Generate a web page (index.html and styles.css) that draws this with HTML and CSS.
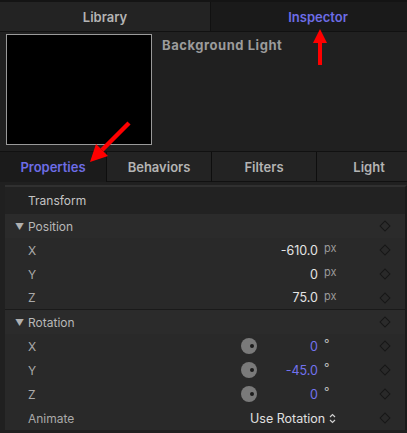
FILE: index.html
```html
<!DOCTYPE html>
<html>
<head>
<meta charset="utf-8">
<link rel="stylesheet" href="styles.css">
</head>
<body>
<div class="app">
  <div class="toptabs">
    <div class="toptab">Library</div>
    <div class="toptab active">Inspector</div>
  </div>
  <div class="header">
    <div class="thumb"></div>
    <div class="title">Background Light</div>
  </div>
  <div class="subtabs">
    <div class="subtab active">Properties</div>
    <div class="subtab">Behaviors</div>
    <div class="subtab">Filters</div>
    <div class="subtab">Light</div>
  </div>
  <div class="panel">
    <div class="section-title">Transform</div>
    <div class="row group"><span class="tri">▼</span><span class="label">Position</span><span class="kf"></span></div>
    <div class="row"><span class="label">X</span><span class="val">-610.0</span><span class="unit">px</span><span class="kf"></span></div>
    <div class="row"><span class="label">Y</span><span class="val">0</span><span class="unit">px</span><span class="kf"></span></div>
    <div class="row sep"><span class="label">Z</span><span class="val">75.0</span><span class="unit">px</span><span class="kf"></span></div>
    <div class="row group"><span class="tri">▼</span><span class="label">Rotation</span><span class="kf"></span></div>
    <div class="row"><span class="label">X</span><span class="dial"></span><span class="val blue">0</span><span class="unit deg">°</span><span class="kf"></span></div>
    <div class="row"><span class="label">Y</span><span class="dial"></span><span class="val blue">-45.0</span><span class="unit deg">°</span><span class="kf"></span></div>
    <div class="row"><span class="label">Z</span><span class="dial"></span><span class="val blue">0</span><span class="unit deg">°</span><span class="kf"></span></div>
    <div class="row"><span class="label">Animate</span><span class="popup">Use Rotation <svg class="chev" width="7" height="11" viewBox="0 0 7 11"><path d="M1 4 L3.5 1.5 L6 4 M1 7 L3.5 9.5 L6 7" fill="none" stroke="#cfcfcf" stroke-width="1.2"/></svg></span><span class="kf"></span></div>
  </div>
  <svg class="arrow arrow-up" width="20" height="40" viewBox="0 0 20 40">
    <polygon points="10,0 3,14 17,14" fill="#ff0000"/>
    <rect x="8" y="13" width="4" height="23" fill="#ff0000"/>
  </svg>
  <svg class="arrow arrow-diag" width="44" height="44" viewBox="0 0 44 44">
    <line x1="41" y1="3" x2="14" y2="30" stroke="#ff0000" stroke-width="4.5"/>
    <polygon points="2,42 8,24 20,36" fill="#ff0000"/>
  </svg>
</div>
</body>
</html>
```
FILE: styles.css
```css
* { box-sizing: border-box; }
html, body { margin: 0; padding: 0; background: #202020; }
body { width: 407px; height: 433px; overflow: hidden; font-family: Inter, "Liberation Sans", sans-serif; }
.app { position: relative; width: 407px; height: 433px; overflow: hidden; background: #202020; border-top: 2px solid #141414; }

.toptabs { display: flex; height: 30px; border-bottom: 1px solid #111; }
.toptab { display: flex; align-items: center; justify-content: center; flex-shrink: 0; font-size: 13px; font-weight: 600; color: #b4b4b4; background: #232323; }
.toptab:first-child { width: 211px; border-right: 1px solid #111; }
.toptab.active { width: 214px; background: #1a1a1a; color: #6d6de6; }

.header { display: flex; height: 119px; padding: 2px 0 0 6px; }
.thumb { width: 146px; height: 111px; background: #000; border: 1px solid #9a9a9a; }
.title { margin-left: 10px; margin-top: 3px; font-size: 13px; font-weight: 700; color: #9b9b9b; letter-spacing: 0.55px; }

.subtabs { display: flex; height: 31px; border-top: 1px solid #111; }
.subtab { display: flex; align-items: center; justify-content: center; flex-shrink: 0; font-size: 13px; font-weight: 600; color: #b4b4b4; background: #232323; border-left: 1px solid #0e0e0e; border-bottom: 1px solid #111; width: 105px; }
.subtab.active { width: 106px; border-left: none; background: #1b1b1b; color: #6d6de6; border-bottom-color: #1b1b1b; }

.panel { margin: 3px 0 0 5px; background: #292929; border-top: 2px solid #303030; border-right: 2px solid #1a1a1a; }
.section-title { height: 27px; display: flex; align-items: center; padding-left: 23px; font-size: 12px; color: #c4c4c4; background: #222; }
.row { position: relative; display: flex; align-items: center; height: 24px; font-size: 12px; color: #a9a9a9; padding-left: 23px; }
.row.sep { border-bottom: 1px solid #1a1a1a; }
.row.group { background: #2b2b2b; }
.tri { position: absolute; left: 10px; font-size: 9px; color: #b0b0b0; }
.label { flex: 1; }
.group .label { color: #b8b8b8; }
.val { color: #e4e4e4; font-size: 12.5px; text-align: right; margin-right: 6px; }
.val.blue { color: #7272ee; width: 61px; }
.unit { width: 57px; font-size: 11px; color: #9a9a9a; position: relative; top: -2px; }
.unit.deg { font-size: 12px; top: -3px; color: #bbb; }
.dial { width: 16px; height: 16px; border-radius: 50%; background: #7a7a7a; position: relative; }
.dial::after { content: ""; position: absolute; width: 4px; height: 4px; border-radius: 50%; background: #1c1c1c; left: 9px; top: 6px; }
.popup { color: #e0e0e0; font-size: 12.5px; width: 131px; display: flex; align-items: center; gap: 4px; }
.kf { width: 8px; height: 8px; border: 1px solid #171717; transform: rotate(45deg); margin-right: 16px; }

.arrow { position: absolute; }
.arrow-up { left: 310px; top: 27px; }
.arrow-diag { left: 88px; top: 118px; }
```
